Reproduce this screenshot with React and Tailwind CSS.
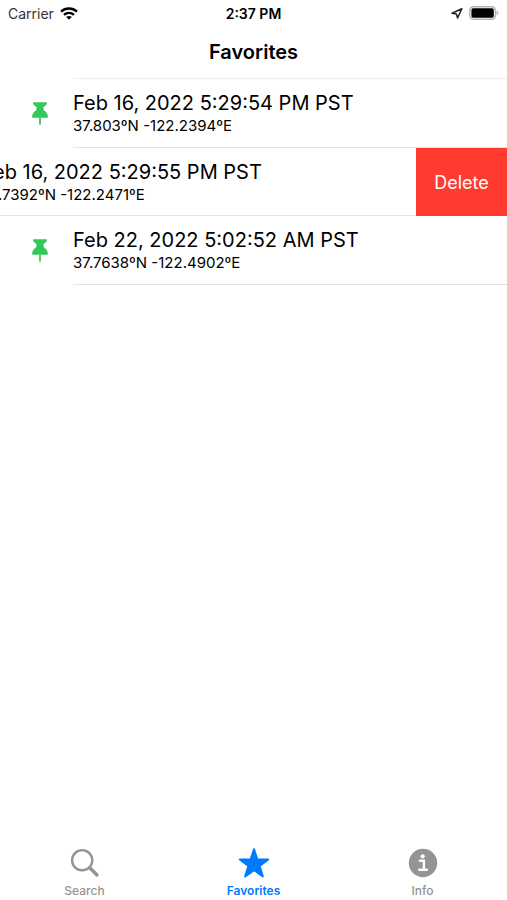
const favorites = [
  { id: 1, date: 'Feb 16, 2022 5:29:54 PM PST', coords: '37.803ºN -122.2394ºE' },
  { id: 2, date: 'Feb 16, 2022 5:29:55 PM PST', coords: '37.7392ºN -122.2471ºE', swiped: true },
  { id: 3, date: 'Feb 22, 2022 5:02:52 AM PST', coords: '37.7638ºN -122.4902ºE' },
];

function WifiIcon() {
  return (
    <svg viewBox="0 0 18 13" className="w-[18px] h-[13px]" fill="none" stroke="black" strokeWidth="2.4">
      <path d="M1 4.6C5.4 0.4 12.6 0.4 17 4.6" />
      <path d="M4 7.8C6.8 5.2 11.2 5.2 14 7.8" />
      <path d="M9 12.8L6.2 10C7.8 8.6 10.2 8.6 11.8 10Z" fill="black" stroke="none" />
    </svg>
  );
}

function LocationIcon() {
  return (
    <svg viewBox="0 0 12 12" className="size-3" fill="none" stroke="#222" strokeWidth="1.5" strokeLinejoin="round">
      <path d="M10.8 1.8L1 6.2L5.4 7L6.6 11Z" />
    </svg>
  );
}

function BatteryIcon() {
  return (
    <svg viewBox="0 0 30 14" className="w-[30px] h-[14px]">
      <rect x="0.8" y="0.8" width="25.6" height="12.4" rx="3.6" fill="white" stroke="#b4b4b4" strokeWidth="1.5" />
      <rect x="2.4" y="2.3" width="22.4" height="9.4" rx="1.6" fill="black" />
      <path d="M27.6 4.6C30 5.6 30 8.4 27.6 9.4Z" fill="#b4b4b4" />
    </svg>
  );
}

function PinIcon() {
  return (
    <svg viewBox="0 0 16 24" className="w-4 h-6 shrink-0" fill="#34c759">
      <path d="M1.7 0.3H14.3C15 0.3 15.2 1.1 14.8 1.9C14 3.4 12.6 4.3 11.4 4.9L11.9 8.6C14 9.7 15.6 11.8 15.9 14.4C16 15.3 15.6 15.8 14.8 15.8H1.2C0.4 15.8 0 15.3 0.1 14.4C0.4 11.8 2 9.7 4.1 8.6L4.6 4.9C3.4 4.3 2 3.4 1.2 1.9C0.8 1.1 1 0.3 1.7 0.3Z" />
      <path d="M7.1 15.5H8.9V21.4L8 23.8L7.1 21.4Z" />
    </svg>
  );
}

function SearchIcon() {
  return (
    <svg viewBox="0 0 30 30" className="size-[30px]" fill="none" stroke="#949494">
      <circle cx="12.2" cy="12.2" r="10.1" strokeWidth="2.4" />
      <path d="M19.8 19.8L27 27" strokeWidth="3.4" strokeLinecap="round" />
    </svg>
  );
}

function StarIcon() {
  return (
    <svg viewBox="0 0 32 30" className="w-8 h-[30px]" fill="#007aff" stroke="#007aff" strokeWidth="2" strokeLinejoin="round">
      <path d="M16 1.3L19.4 11.3L30.2 11.5L21.6 17.9L24.8 28.4L16 22.1L7.2 28.4L10.4 17.9L1.8 11.5L12.6 11.3Z" />
    </svg>
  );
}

function InfoIcon() {
  return (
    <svg viewBox="0 0 30 30" className="size-[30px]">
      <circle cx="15" cy="15" r="14.2" fill="#949494" />
      <circle cx="14.7" cy="8.3" r="2.1" fill="white" />
      <path d="M11.8 12.8H15.9V21.6M11.3 21.7H19" fill="none" stroke="white" strokeWidth="2.4" strokeLinecap="round" />
    </svg>
  );
}

function FavoriteText({ item }) {
  return (
    <div className="pt-3 whitespace-nowrap">
      <p className="text-[20px] leading-6">{item.date}</p>
      <p className="text-[15px] leading-[22px]">{item.coords}</p>
    </div>
  );
}

function FavoriteRow({ item }) {
  // swiped row slides left by the width of the delete button
  if (item.swiped) {
    return (
      <li className="flex h-[68px] overflow-hidden">
        <div className="-ml-[91px] pl-[73px] flex-1 border-b border-[#e2e2e2]">
          <FavoriteText item={item} />
        </div>
        <button className="w-[91px] shrink-0 bg-[#ff3b30] text-white text-[18px]">Delete</button>
      </li>
    );
  }

  return (
    <li className="flex h-[69px]">
      <div className="w-[73px] shrink-0 flex items-center justify-center pl-[7px]">
        <PinIcon />
      </div>
      <div className="flex-1 border-b border-[#e2e2e2]">
        <FavoriteText item={item} />
      </div>
    </li>
  );
}

function Tab({ label, icon, active }) {
  return (
    <a
      href="#"
      aria-current={active ? 'page' : undefined}
      className={`flex-1 flex flex-col items-center text-[12px] leading-4 ${
        active ? 'text-[#007aff] font-semibold' : 'text-[#949494] font-medium'
      }`}
    >
      <span className="pb-[5px]">{icon}</span>
      {label}
    </a>
  );
}

function App() {
  return (
    <div className="min-h-screen flex flex-col bg-white text-black font-['Inter',sans-serif]">
      <div className="h-[26px] px-2 grid grid-cols-3 items-center text-[14px]">
        <div className="flex items-center gap-1.5 text-[#333]">
          Carrier
          <WifiIcon />
        </div>
        <div className="text-center font-semibold">2:37 PM</div>
        <div className="flex items-center justify-end gap-1.5">
          <LocationIcon />
          <BatteryIcon />
        </div>
      </div>

      <header className="h-[52px] flex items-center justify-center">
        <h1 className="text-[20px] font-semibold">Favorites</h1>
      </header>

      <main className="flex-1">
        <div className="ml-[73px] border-t border-[#eeeeee]" />
        <ul>
          {favorites.map((item) => (
            <FavoriteRow key={item.id} item={item} />
          ))}
        </ul>
      </main>

      <nav className="flex pb-px">
        <Tab label="Search" icon={<SearchIcon />} />
        <Tab label="Favorites" icon={<StarIcon />} active />
        <Tab label="Info" icon={<InfoIcon />} />
      </nav>
    </div>
  );
}

export default App;
